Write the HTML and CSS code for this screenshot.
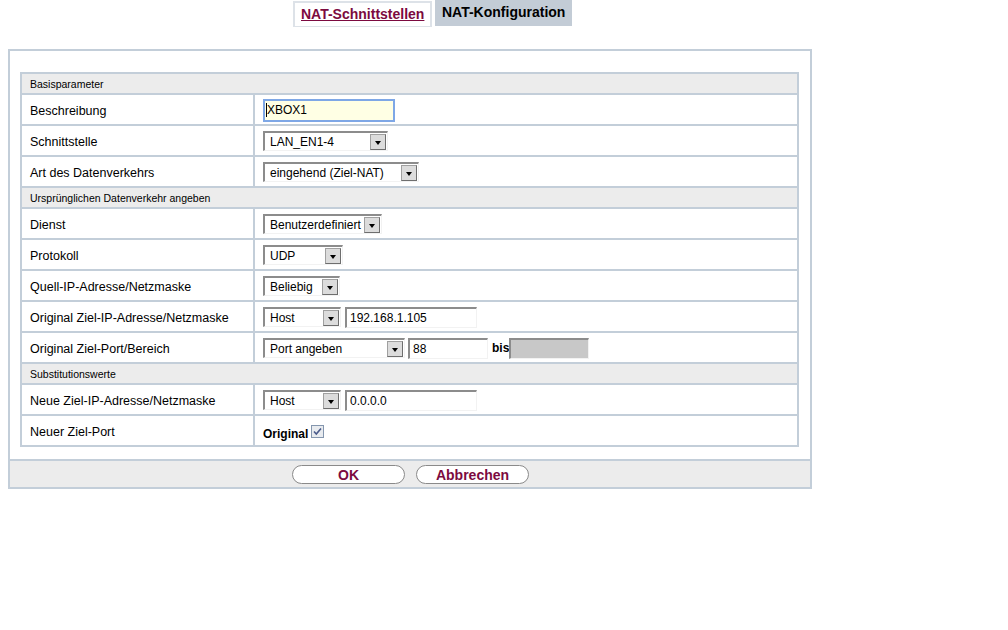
FILE: index.html
```html
<!DOCTYPE html>
<html lang="de">
<head>
<meta charset="utf-8">
<title>NAT-Konfiguration</title>
<link rel="stylesheet" href="styles.css">
</head>
<body>
<div class="tabs">
  <a class="tab tab-link" href="#">NAT-Schnittstellen</a>
  <span class="tab tab-active">NAT-Konfiguration</span>
</div>

<div class="frame">
  <div class="table">
    <div class="sec">Basisparameter</div>
    <div class="row">
      <div class="lbl">Beschreibung</div>
      <div class="val"><span class="input focus w132">XBOX1</span></div>
    </div>
    <div class="row">
      <div class="lbl">Schnittstelle</div>
      <div class="val"><span class="select w125">LAN_EN1-4<span class="dd"></span></span></div>
    </div>
    <div class="row">
      <div class="lbl">Art des Datenverkehrs</div>
      <div class="val"><span class="select w156">eingehend (Ziel-NAT)<span class="dd"></span></span></div>
    </div>

    <div class="sec">Ursprünglichen Datenverkehr angeben</div>
    <div class="row">
      <div class="lbl">Dienst</div>
      <div class="val"><span class="select w119">Benutzerdefiniert<span class="dd"></span></span></div>
    </div>
    <div class="row">
      <div class="lbl">Protokoll</div>
      <div class="val"><span class="select w80">UDP<span class="dd"></span></span></div>
    </div>
    <div class="row">
      <div class="lbl">Quell-IP-Adresse/Netzmaske</div>
      <div class="val"><span class="select w77">Beliebig<span class="dd"></span></span></div>
    </div>
    <div class="row">
      <div class="lbl">Original Ziel-IP-Adresse/Netzmaske</div>
      <div class="val">
        <span class="select w78">Host<span class="dd"></span></span>
        <span class="input w132">192.168.1.105</span>
      </div>
    </div>
    <div class="row">
      <div class="lbl">Original Ziel-Port/Bereich</div>
      <div class="val">
        <span class="select w142">Port angeben<span class="dd"></span></span>
        <span class="input w80 ml1">88</span>
        <span class="bis">bis</span>
        <span class="input disabled w80"></span>
      </div>
    </div>

    <div class="sec">Substitutionswerte</div>
    <div class="row">
      <div class="lbl">Neue Ziel-IP-Adresse/Netzmaske</div>
      <div class="val">
        <span class="select w78">Host<span class="dd"></span></span>
        <span class="input w132">0.0.0.0</span>
      </div>
    </div>
    <div class="row last">
      <div class="lbl">Neuer Ziel-Port</div>
      <div class="val">
        <span class="orig">Original</span>
        <svg class="check" width="13" height="13" viewBox="0 0 13 13">
          <rect x="0.5" y="0.5" width="12" height="12" fill="#e8ebef" stroke="#8496ae"/>
          <path d="M3 6.5 L5.3 9 L10 3.5" fill="none" stroke="#4a5a8a" stroke-width="1.6"/>
        </svg>
      </div>
    </div>
  </div>

  <div class="footer">
    <button class="btn w113">OK</button>
    <button class="btn w113">Abbrechen</button>
  </div>
</div>
</body>
</html>
```

FILE: styles.css
```css
html, body {
  margin: 0;
  padding: 0;
  background: #ffffff;
  font-family: "Liberation Sans", Arial, sans-serif;
  color: #000000;
}

.tabs {
  display: flex;
  align-items: flex-start;
  gap: 3px;
  padding-left: 293px;
  height: 27px;
}

.tab {
  box-sizing: border-box;
  display: flex;
  align-items: center;
  font-size: 14px;
  font-weight: bold;
  height: 27px;
  white-space: nowrap;
  padding-bottom: 2px;
}

.tab-link {
  width: 139px;
  margin-top: 1px;
  height: 26px;
  padding-left: 6px;
  border: 2px solid #dde2e8;
  border-bottom-width: 1px;
  color: #7c0a40;
  text-decoration: underline;
  background: #ffffff;
}

.tab-active {
  width: 137px;
  height: 26px;
  padding-left: 7px;
  background: #c3ccd6;
  color: #000000;
}

.frame {
  box-sizing: border-box;
  width: 804px;
  margin: 22px 0 0 8px;
  border: 2px solid #c3ced9;
}

.table {
  width: 779px;
  box-sizing: border-box;
  margin: 21px 0 0 10px;
  border: 2px solid #c3ced9;
}

.sec {
  box-sizing: border-box;
  background: #ececec;
  border-bottom: 2px solid #c3ced9;
  display: flex;
  align-items: center;
  padding-left: 8px;
  font-size: 10.5px;
  height: 21px;
}

.row {
  display: flex;
  height: 31px;
  box-sizing: border-box;
  border-bottom: 2px solid #c3ced9;
}

.row.last {
  height: 29px;
  border-bottom: none;
}

.lbl {
  box-sizing: border-box;
  width: 233px;
  flex: none;
  border-right: 2px solid #c3ced9;
  padding-left: 8px;
  display: flex;
  align-items: center;
  font-size: 12.5px;
  padding-top: 2px;
}

.val {
  flex: 1;
  display: flex;
  align-items: center;
  padding-left: 8px;
  gap: 4px;
  font-size: 12px;
  padding-top: 1px;
}

.select {
  position: relative;
  box-sizing: border-box;
  height: 20px;
  display: flex;
  align-items: center;
  padding-left: 5px;
  background: #ffffff;
  border-style: solid;
  border-width: 2px 1px 1px 2px;
  border-color: #8c8c8c #f2f2f2 #f2f2f2 #8c8c8c;
  white-space: nowrap;
}

.dd {
  position: absolute;
  right: 1px;
  top: 1px;
  width: 16px;
  height: 16px;
  box-sizing: border-box;
  background: #dcdcdc;
  border: 1px solid;
  border-color: #a0a0a0 #6e6e6e #6e6e6e #a0a0a0;
}

.dd::after {
  content: "";
  position: absolute;
  left: 4px;
  top: 6px;
  border-left: 3.5px solid transparent;
  border-right: 3.5px solid transparent;
  border-top: 4px solid #000000;
}

.input {
  box-sizing: border-box;
  height: 21px;
  display: flex;
  align-items: center;
  padding-left: 3px;
  background: #ffffff;
  border-style: solid;
  border-width: 2px 1px 1px 2px;
  border-color: #8c8c8c #f2f2f2 #f2f2f2 #8c8c8c;
  white-space: nowrap;
}

.input.focus {
  height: 23px;
  border: 2px solid #7ea7e6;
  background: #ffffe4;
  padding-left: 1px;
}

.input.focus::before {
  content: "";
  width: 1px;
  height: 14px;
  background: #000;
}

.input.disabled {
  background: #c8c8c8;
}

.ml1 { margin-left: -1px; }

.bis {
  font-weight: bold;
  margin-right: -4px;
}

.orig {
  font-weight: bold;
  font-size: 12px;
  margin-top: 6px;
}

.check {
  margin-top: 1px;
  margin-left: -1px;
}

.w77 { width: 77px; }
.w78 { width: 78px; }
.w80 { width: 80px; }
.w119 { width: 119px; }
.w125 { width: 125px; }
.w132 { width: 132px; }
.w142 { width: 142px; }
.w156 { width: 156px; }
.w113 { width: 113px; }

.footer {
  margin-top: 12px;
  border-top: 2px solid #c3ced9;
  background: #ececec;
  height: 26px;
  display: flex;
  justify-content: flex-start;
  align-items: center;
  padding-left: 282px;
  gap: 11px;
}

.btn {
  height: 19px;
  box-sizing: border-box;
  border: 1px solid #8a8a8a;
  border-radius: 10px;
  background: #ffffff;
  font-family: "Liberation Sans", Arial, sans-serif;
  font-size: 14px;
  font-weight: bold;
  color: #7c0a40;
  padding: 0;
  line-height: 16px;
  margin-top: 1px;
}
```
